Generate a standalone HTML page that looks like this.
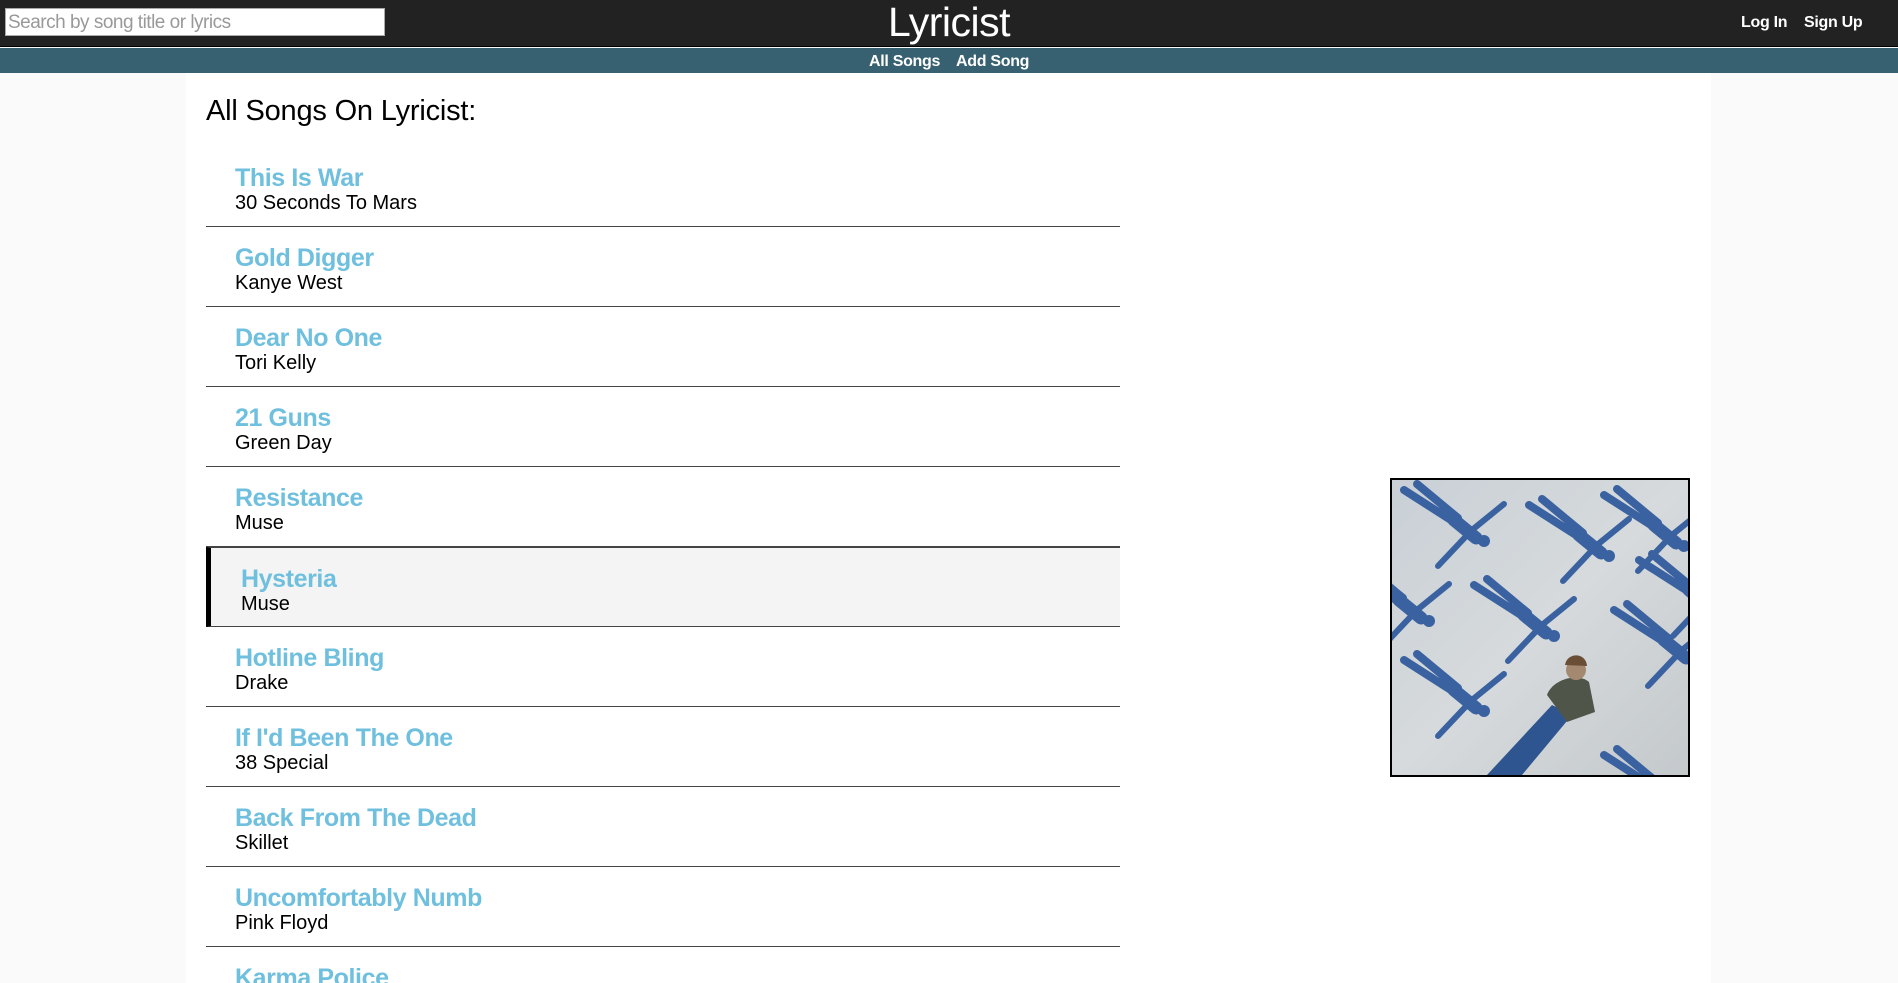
<!DOCTYPE html>
<html><head><meta charset="utf-8"><style>
*{margin:0;padding:0;box-sizing:border-box}
html,body{width:1898px;height:983px;overflow:hidden}
body{background:#fafafa;font-family:"Liberation Sans",sans-serif;position:relative}
.top{position:absolute;left:0;top:0;width:1898px;height:47px;background:#222;border-bottom:1px solid #000}
.search{position:absolute;left:5px;top:8px;width:380px;height:28px;background:#fff;border:1px solid #aaa;font-size:19px;color:#999;padding:3px 2px;letter-spacing:-0.5px;white-space:nowrap}
.logo{position:absolute;left:0;width:1898px;top:0;text-align:center;color:#fff;font-size:41px;line-height:44px;letter-spacing:-0.5px}
.auth{position:absolute;top:14px;color:#fff;font-size:16px;font-weight:bold;letter-spacing:-0.3px}
.nav{position:absolute;left:0;top:48px;width:1898px;height:25px;background:#376170}
.nav span{position:absolute;top:5px;color:#fff;font-size:16px;font-weight:bold;letter-spacing:-0.3px}
.panel{position:absolute;left:186px;top:73px;width:1525px;height:910px;background:#fff}
h1{position:absolute;left:206px;top:95px;font-size:29px;font-weight:normal;color:#000;letter-spacing:-0.2px}
.row{position:absolute;left:206px;width:914px;height:80px;border-bottom:1.5px solid #444}
.row .t{position:absolute;left:29px;top:17px;font-size:25px;font-weight:bold;color:#6fbfde;letter-spacing:-0.4px}
.row .a{position:absolute;left:29px;top:45px;font-size:20px;color:#000}
.row.sel{background:#f4f4f4;border-left:5px solid #000;border-top:1.5px solid #444}
.row.sel .t,.row.sel .a{left:30px}
.art{position:absolute;left:1390px;top:478px;width:300px;height:299px;border:2px solid #000;overflow:hidden}
</style></head><body>
<div class="top">
<div class="search">Search by song title or lyrics</div>
<div class="logo">Lyricist</div>
<div class="auth" style="left:1741px">Log In</div>
<div class="auth" style="left:1804px">Sign Up</div>
</div>
<div class="nav"><span style="left:869px">All Songs</span><span style="left:956px">Add Song</span></div>
<div class="panel"></div>
<h1>All Songs On Lyricist:</h1>
<div class="row" style="top:147px"><div class="t">This Is War</div><div class="a">30 Seconds To Mars</div></div>
<div class="row" style="top:227px"><div class="t">Gold Digger</div><div class="a">Kanye West</div></div>
<div class="row" style="top:307px"><div class="t">Dear No One</div><div class="a">Tori Kelly</div></div>
<div class="row" style="top:387px"><div class="t">21 Guns</div><div class="a">Green Day</div></div>
<div class="row" style="top:467px"><div class="t">Resistance</div><div class="a">Muse</div></div>
<div class="row sel" style="top:547px"><div class="t">Hysteria</div><div class="a">Muse</div></div>
<div class="row" style="top:627px"><div class="t">Hotline Bling</div><div class="a">Drake</div></div>
<div class="row" style="top:707px"><div class="t">If I'd Been The One</div><div class="a">38 Special</div></div>
<div class="row" style="top:787px"><div class="t">Back From The Dead</div><div class="a">Skillet</div></div>
<div class="row" style="top:867px"><div class="t">Uncomfortably Numb</div><div class="a">Pink Floyd</div></div>
<div class="row" style="top:947px"><div class="t">Karma Police</div><div class="a">Radiohead</div></div>
<div class="art"><svg width="296" height="295" viewBox="0 0 296 295">
<defs><linearGradient id="g" x1="0" y1="0" x2="1" y2="1"><stop offset="0" stop-color="#c9d0d6"/><stop offset="0.5" stop-color="#d6dadc"/><stop offset="1" stop-color="#c4c9cc"/></linearGradient>
<g id="f" fill="none" stroke="#3a62a0" stroke-linecap="round"><path d="M12 10 L62 42 M25 4 L66 38" stroke-width="8"/><path d="M62 40 L84 58" stroke-width="13"/><path d="M112 24 L80 50 L46 86" stroke-width="6"/><circle cx="92" cy="61" r="6" fill="#3a62a0" stroke="none"/></g></defs>
<rect width="296" height="295" fill="url(#g)"/>
<use href="#f" x="0" y="0"/><use href="#f" x="125" y="15"/><use href="#f" x="200" y="5"/>
<use href="#f" x="70" y="95"/><use href="#f" x="210" y="120"/><use href="#f" x="-55" y="80"/>
<use href="#f" x="0" y="170"/><use href="#f" x="200" y="265"/><use href="#f" x="235" y="70"/>
<path d="M95 295 L160 225 L180 235 L130 295 Z" fill="#2f5590"/>
<path d="M155 215 C160 200 185 192 197 202 L203 232 L175 242 Z" fill="#4f5548"/>
<circle cx="184" cy="190" r="10" fill="#a58870"/><path d="M173 185 C175 172 194 172 195 186 Z" fill="#6a4e35"/>
</svg></div>
</body></html>
